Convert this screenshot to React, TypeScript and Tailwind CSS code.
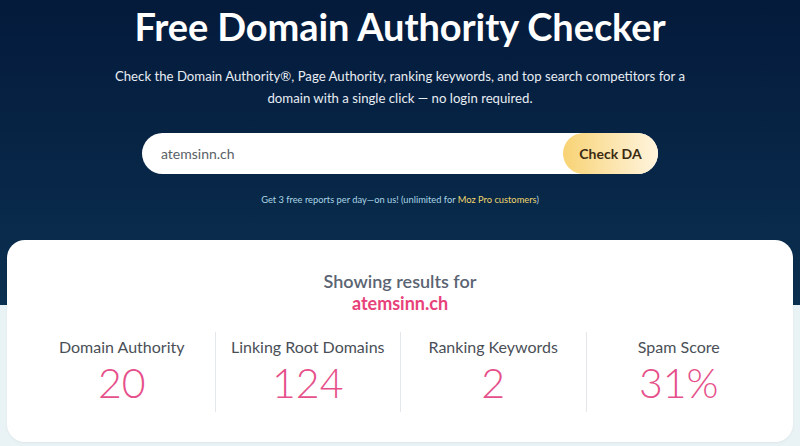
import React from "react";

const stats = [
  { label: "Domain Authority", value: "20" },
  { label: "Linking Root Domains", value: "124" },
  { label: "Ranking Keywords", value: "2" },
  { label: "Spam Score", value: "31%" },
];

export default function App() {
  return (
    <div className="relative w-[800px] h-[446px] overflow-hidden bg-[#e9f2f4] font-['Lato',sans-serif]">
      {/* dark hero band */}
      <div className="h-[305px] bg-gradient-to-b from-[#041a3b] to-[#0c3050]">
        <div className="flex flex-col items-center pt-[2px]">
          <h1 className="text-[38px] leading-[48px] font-bold text-white tracking-[-0.1px]">
            Free Domain Authority Checker
          </h1>
          <p className="mt-[15px] text-[13.2px] leading-[22px] text-[#e8edf3] text-center w-[600px]">
            Check the Domain Authority®, Page Authority, ranking keywords, and top search competitors for a
            domain with a single click — no login required.
          </p>
          <div className="mt-[24px] flex items-center w-[516px] h-[41px] rounded-full bg-white">
            <span className="flex-1 pl-[19px] text-[14px] text-[#5a5f66]">atemsinn.ch</span>
            <button className="h-[41px] w-[95px] rounded-full bg-gradient-to-r from-[#f8d373] to-[#fff4dd] text-[14px] font-bold text-[#3a2a12]">
              Check DA
            </button>
          </div>
          <p className="mt-[19px] text-[9.3px] text-[#a9d6e6]">
            Get 3 free reports per day—on us! (unlimited for{" "}
            <span className="text-[#f0d66e]">Moz Pro customers</span>)
          </p>
        </div>
      </div>

      {/* results card overlaps the band */}
      <div className="absolute left-[7px] top-[240px] w-[786px] h-[202px] rounded-[18px] bg-white shadow-[0_1px_3px_rgba(0,0,0,0.05)]">
        <div className="flex flex-col items-center pt-[30px]">
          <div className="text-[18px] leading-[22px] font-semibold text-[#5b6472]">Showing results for</div>
          <div className="text-[18px] leading-[22px] font-bold text-[#e8417a]">atemsinn.ch</div>
        </div>
        <div className="mt-[18px] mx-[22px] grid grid-cols-4">
          {stats.map((s, i) => (
            <div
              key={s.label}
              className={`flex flex-col items-center h-[80px] ${i > 0 ? "border-l border-[#e3e6ea]" : ""}`}
            >
              <div className="text-[16px] leading-[20px] text-[#4a4f57] pt-[5px]">{s.label}</div>
              <div className="text-[41px] leading-[48px] font-light text-[#e6508a] mt-[2px]">{s.value}</div>
            </div>
          ))}
        </div>
      </div>
    </div>
  );
}
